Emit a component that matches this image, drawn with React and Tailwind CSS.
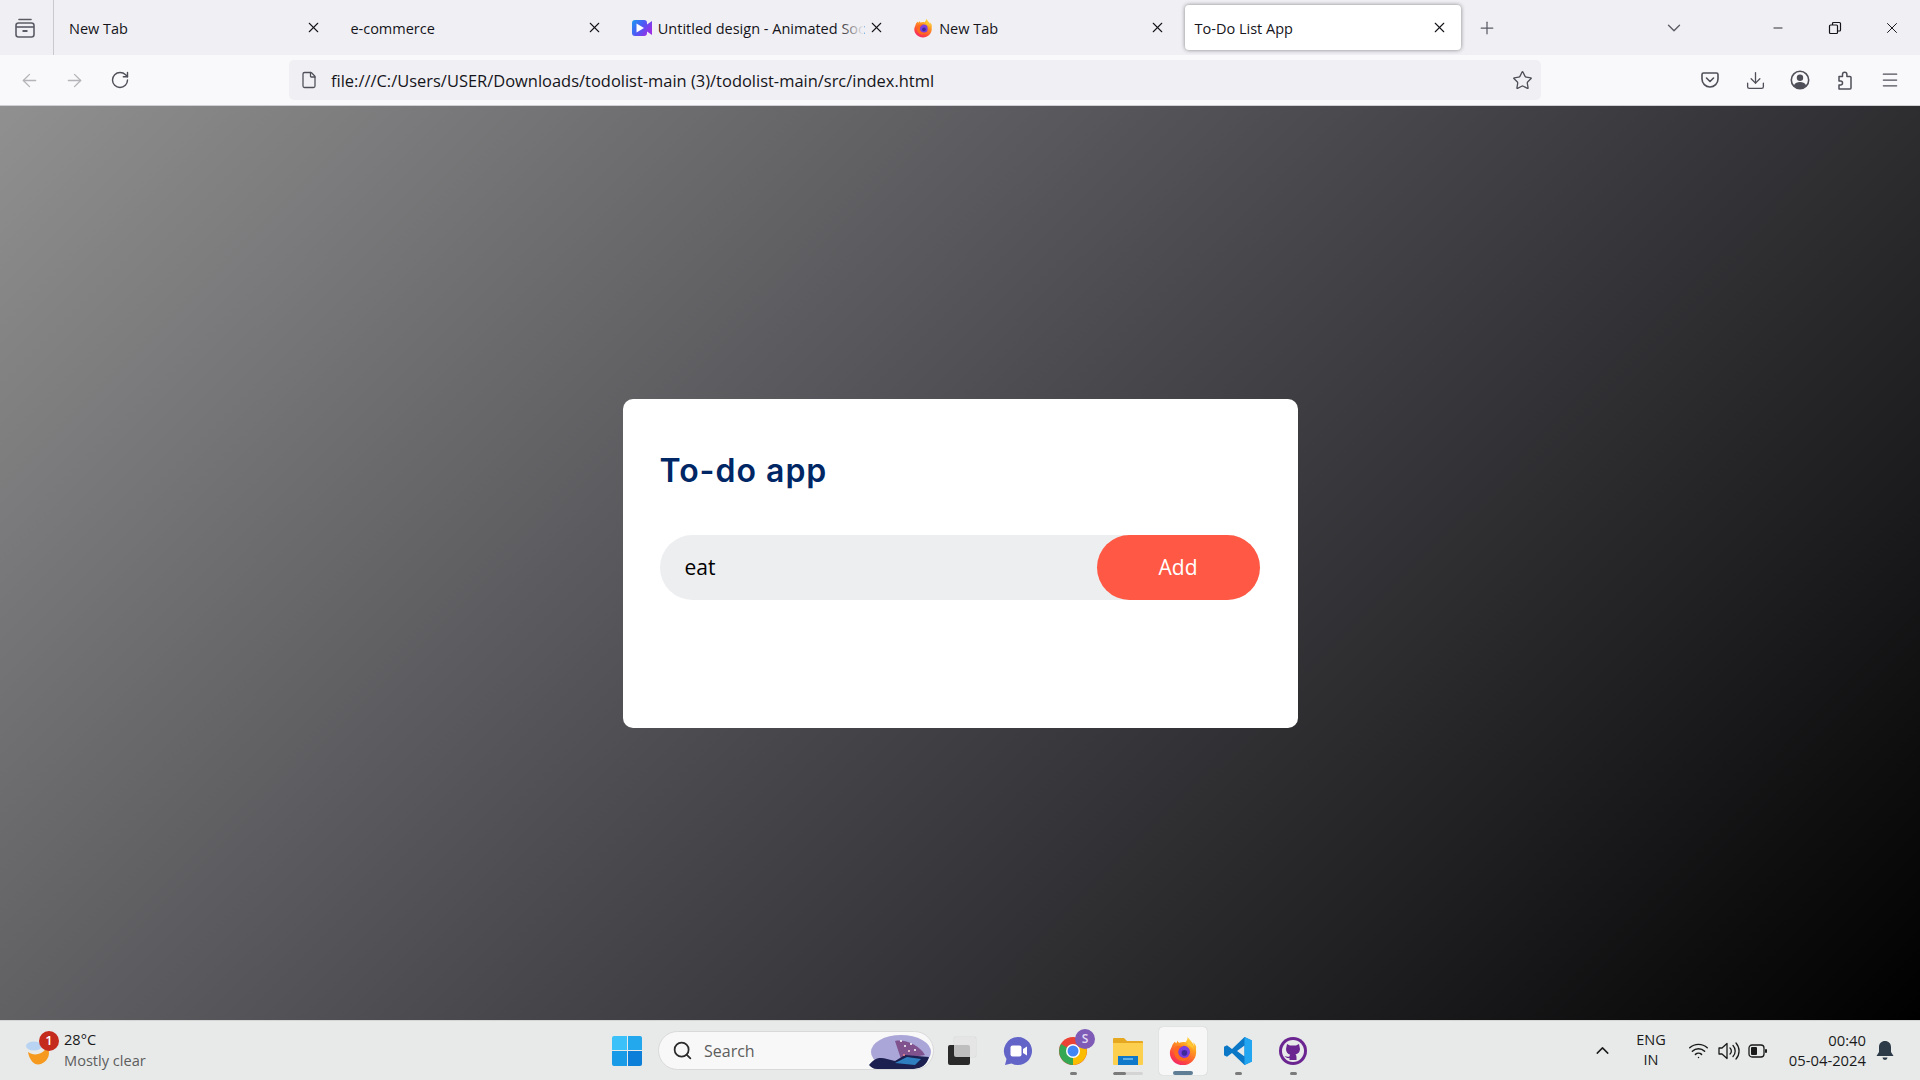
import React from "react";
import {
  ArrowLeft,
  ArrowRight,
  ChevronDown,
  ChevronUp,
  Download,
  File,
  Menu,
  Minus,
  Plus,
  RotateCw,
  Search,
  Star,
  Wifi,
  X,
} from "lucide-react";

const FirefoxIcon = ({ size = 20, id = "ff" }) => (
  <svg width={size} height={size} viewBox="0 0 32 32">
    <defs>
      <linearGradient id={id} x1="0.8" y1="0" x2="0.25" y2="1">
        <stop offset="0" stopColor="#ffe04a" />
        <stop offset="0.35" stopColor="#ff9a1f" />
        <stop offset="0.75" stopColor="#ff4a3a" />
        <stop offset="1" stopColor="#f0246e" />
      </linearGradient>
    </defs>
    <path d="M30 11c-.7-1.800-2.200-3.700-3.400-4.300.8 1.600 1.200 3.100 1.400 4.200C26 6 23 4 21 1c-.3 2.500-.8 4.200-2.300 5.600-2.300-.6-4.700-.3-6.500.7-1.100-.5-1.700-1.300-2.200-2.500-.2 1-.6 2.100-1.100 2.800-.7-.3-1.300-.8-1.700-1.500C5.200 8.200 4.400 10 3.800 12 2.600 14 2 16 2 18c0 7.300 6.300 13 14 13s14-6 14-13.500c0-2.300-.2-4.500 0-6.500z" fill={`url(#${id})`} />
    <circle cx="17" cy="17" r="6.500" fill="#7a3fe0" />
    <circle cx="17.500" cy="18" r="3" fill="#3f2a9c" />
    <path d="M8 11.500c2.500-1.500 5.500-1.500 8.500-.5-2.500.5-5 2-5.500 5-.6 4 2.500 7.500 7 7.500 3 0 5-1 6.500-3-1.500 4-5.500 6.500-9.500 6-5-.5-8.500-4.500-8.500-9.500 0-2 .5-4 1.500-5.500z" fill="#ff6a1f" />
    <path d="M19 5c4 .5 8 4 8.500 10-1.500-3-4-5-7-5.500 1-1.500 0-3.500-1.500-4.500z" fill="#ffc62e" />
  </svg>
);

const CanvaIcon = () => (
  <svg width="20" height="20" viewBox="0 0 20 20">
    <defs>
      <linearGradient id="canva" x1="0" y1="0" x2="1" y2="0.6">
        <stop offset="0" stopColor="#1d9bf0" />
        <stop offset="0.5" stopColor="#4a5cf5" />
        <stop offset="1" stopColor="#9a2fe6" />
      </linearGradient>
    </defs>
    <path d="M3 2h9a3 3 0 0 1 3 3v1.500L20 3v14l-5-3.500V15a3 3 0 0 1-3 3H3a3 3 0 0 1-3-3V5a3 3 0 0 1 3-3z" fill="url(#canva)" />
    <path d="M4.500 5.500L12 10l-7.500 4.500z" fill="#fff" />
  </svg>
);

const Tab = ({ title, icon, active, fade }) => (
  <div
    className={`relative flex h-[45px] w-[276px] shrink-0 items-center rounded-[4px] pl-[10px] pr-[13px] ${
      active ? "bg-white shadow-[0_0_4px_rgba(0,0,0,0.45)]" : ""
    }`}
  >
    {icon && <span className="mr-[6px] flex w-[20px] shrink-0">{icon}</span>}
    <span className="relative flex-1 whitespace-nowrap pt-[2px] text-[14.5px] text-[#15141a]">
      {title}
      {fade && <span className="absolute bottom-0 right-[4px] top-0 w-[26px] bg-gradient-to-r from-transparent to-[#f0f0f4]" />}
    </span>
    <X size={17} strokeWidth={1.5} className="shrink-0 text-[#15141a]" />
  </div>
);

const ToolIcon = ({ children, className = "" }) => (
  <span className={`flex h-[24px] w-[24px] items-center justify-center text-[#4f4f59] ${className}`}>{children}</span>
);

const TaskIcon = ({ children, bar, active }) => (
  <div
    className={`relative flex h-[48px] w-[48px] items-center justify-center rounded-[4px] ${
      active ? "bg-[#f7f7f7] shadow-[0_0_1px_rgba(0,0,0,0.25)]" : ""
    }`}
  >
    {children}
    {bar}
  </div>
);

export default function App() {
  return (
    <div
      className="flex h-screen w-full flex-col overflow-hidden"
      style={{ fontFamily: '"Open Sans", "Noto Sans", sans-serif' }}
    >
      {/* tab strip */}
      <div className="flex h-[55px] shrink-0 items-center bg-[#f0f0f4]">
        <div className="flex h-full w-[54px] shrink-0 items-center justify-center border-r border-[#c9c9cf] pr-[4px]">
          <svg width="20" height="20" viewBox="0 0 20 20" fill="none" stroke="#5b5b66" strokeWidth="1.6">
            <path d="M4 1.500h12" strokeLinecap="round" />
            <rect x="1" y="5" width="18" height="14" rx="2.500" />
            <path d="M1 9h18" />
            <path d="M7.500 13h5" strokeWidth="2" />
          </svg>
        </div>
        <div className="ml-[5px] flex gap-[5.4px]">
          <Tab title="New Tab" />
          <Tab title="e-commerce" />
          <Tab title="Untitled design - Animated Soc" icon={<CanvaIcon />} fade />
          <Tab title="New Tab" icon={<FirefoxIcon id="ffTab" />} />
          <Tab title="To-Do List App" active />
        </div>
        <Plus size={20} strokeWidth={1.5} className="ml-[16px] text-[#5b5b66]" />
        <ChevronDown size={22} strokeWidth={1.5} className="ml-[166px] text-[#5b5b66]" />
        <Minus size={14} strokeWidth={1.5} className="ml-[86px] text-[#15141a]" />
        <svg width="14" height="14" viewBox="0 0 14 14" fill="none" stroke="#15141a" strokeWidth="1.200" className="ml-[43px]">
          <rect x="1.500" y="4" width="8" height="8.500" rx="1" />
          <path d="M4.500 4V2.500a1 1 0 0 1 1-1h6a1 1 0 0 1 1 1v6.500a1 1 0 0 1-1 1h-2" />
        </svg>
        <X size={18} strokeWidth={1.3} className="ml-[41px] text-[#15141a]" />
      </div>

      {/* toolbar */}
      <div className="flex h-[51px] shrink-0 items-center border-b border-[#cfcfd4] bg-[#f9f9fb]">
        <ToolIcon className="ml-[17px] text-[#b4b4b9]">
          <ArrowLeft size={21} strokeWidth={1.5} />
        </ToolIcon>
        <ToolIcon className="ml-[21px] text-[#b4b4b9]">
          <ArrowRight size={21} strokeWidth={1.5} />
        </ToolIcon>
        <ToolIcon className="ml-[22px]">
          <RotateCw size={20} strokeWidth={1.7} />
        </ToolIcon>
        <div className="ml-[157px] flex h-[40px] w-[1252px] items-center rounded-[5px] bg-[#f0f0f4]">
          <File size={18} strokeWidth={1.7} className="ml-[11px] text-[#4f4f59]" />
          <span className="ml-[13px] flex-1 whitespace-nowrap pt-[2px] text-[16.47px] text-[#15141a]">
            file:///C:/Users/USER/Downloads/todolist-main (3)/todolist-main/src/index.html
          </span>
          <Star size={21} strokeWidth={1.5} className="mr-[8px] text-[#4f4f59]" />
        </div>
        <ToolIcon className="ml-[157px]">
          <svg width="20" height="20" viewBox="0 0 20 20" fill="none" stroke="currentColor" strokeWidth="1.600">
            <path d="M3.500 3h13a1.500 1.500 0 0 1 1.500 1.500V9a8 8 0 0 1-16 0V4.500A1.500 1.500 0 0 1 3.500 3z" />
            <path d="M6.500 8l3.500 3.500L13.500 8" strokeLinecap="round" strokeLinejoin="round" />
          </svg>
        </ToolIcon>
        <ToolIcon className="ml-[21px]">
          <Download size={21} strokeWidth={1.5} />
        </ToolIcon>
        <ToolIcon className="ml-[21px]">
          <svg width="20" height="20" viewBox="0 0 20 20">
            <circle cx="10" cy="10" r="8.700" fill="none" stroke="currentColor" strokeWidth="1.600" />
            <circle cx="10" cy="7.800" r="3.200" fill="currentColor" />
            <path d="M3.800 15.500C5 12.800 7.500 12 10 12s5 .8 6.200 3.500A8 8 0 0 1 10 18.500a8 8 0 0 1-6.200-3z" fill="currentColor" />
          </svg>
        </ToolIcon>
        <ToolIcon className="ml-[21px]">
          <svg width="20" height="20" viewBox="0 0 20 20" fill="none" stroke="currentColor" strokeWidth="1.500" strokeLinejoin="round">
            <path d="M4 6.500h3.500V4.500a2.200 2.200 0 0 1 4.400 0v2H15a1 1 0 0 1 1 1v10.500a1 1 0 0 1-1 1H4v-4h1.500a2 2 0 0 0 0-4H4z" />
          </svg>
        </ToolIcon>
        <ToolIcon className="ml-[21px]">
          <Menu size={20} strokeWidth={1.5} />
        </ToolIcon>
      </div>

      {/* page */}
      <main className="flex min-h-0 flex-1 items-start justify-center bg-[linear-gradient(135deg,#909090,#47464b_50%,#000000)]">
        <div className="mt-[293px] h-[329px] w-[675px] rounded-[10px] bg-white px-[37px] pt-[50px]">
          <h2
            className="text-[32px] leading-[44px] font-semibold tracking-[1px] text-[#002765]"
            style={{ fontFamily: '"Inter", "Open Sans", sans-serif' }}
          >
            To-do app
          </h2>
          <div className="mt-[42px] flex h-[65px] w-[600px] items-center rounded-full bg-[#edeef0]">
            <span className="ml-[25px] flex-1 pt-[1px] text-[21px] text-black">eat</span>
            <button className="h-[65px] w-[163px] rounded-full bg-[#ff5945] text-[21px] text-white">Add</button>
          </div>
        </div>
      </main>

      {/* windows taskbar */}
      <div className="flex h-[60px] shrink-0 items-center border-t border-[#d4d6d6] bg-[#e8eaea]">
        <div className="relative ml-[25px] h-[28px] w-[28px] shrink-0">
          <svg width="30" height="30" viewBox="0 0 30 30">
            <path d="M3 15c4 3 9 3 13 1 3-1.500 5-4 6-7 4 6 2 15-6 18-7 2.500-12-5-13-12z" fill="#f59a1f" />
            <ellipse cx="9" cy="9" rx="8" ry="4.500" fill="#b9d4f2" />
          </svg>
          <span className="absolute -top-[6px] left-[14px] flex h-[20px] w-[20px] items-center justify-center rounded-full bg-[#c42b1c] text-[13px] font-semibold text-white">
            1
          </span>
        </div>
        <div className="ml-[11px] -mt-[2px] flex w-[120px] shrink-0 flex-col text-[14.6px] leading-[21px]">
          <span className="text-[#1a1a1a]">28°C</span>
          <span className="text-[#5d5d5d]">Mostly clear</span>
        </div>
        {/* centre group */}
        <div className="ml-[428px] flex h-[40px] w-[30px] shrink-0 items-center justify-center">
          <div className="grid h-[30px] w-[30px] grid-cols-2 gap-[1px]">
            <span className="rounded-tl-[2px] bg-[#3cc2f8]" />
            <span className="rounded-tr-[2px] bg-[#23a8ee]" />
            <span className="rounded-bl-[2px] bg-[#1a9be8]" />
            <span className="rounded-br-[2px] bg-[#0d7fd8]" />
          </div>
        </div>
        <div className="relative ml-[16px] flex h-[39px] w-[276px] shrink-0 items-center overflow-hidden rounded-full border border-[#d9d9d9] bg-[#f8f8f8]">
          <Search size={21} strokeWidth={2} className="ml-[13px] text-[#2b2b2b]" />
          <span className="ml-[11px] text-[16px] text-[#5d5d5d]">Search</span>
          <svg width="64" height="34" viewBox="0 0 64 34" className="absolute right-[2px] top-[3px]">
            <ellipse cx="34" cy="17" rx="30" ry="17" fill="#aaa6d8" />
            <path d="M28 6c10-2 24 4 30 14L34 24z" fill="#80538f" />
            <path d="M2 30c6-8 12-8 18-6l8 2 10-6 24 2c-2 8-8 12-16 12H10c-4 0-6-2-8-4z" fill="#1b2050" />
            <path d="M28 28l12-6 14 2-6 6z" fill="#2f7fc0" />
            <circle cx="34" cy="6" r="1" fill="#fff" />
            <circle cx="38" cy="11" r="1" fill="#fff" />
            <circle cx="44" cy="9" r="1" fill="#fff" />
            <circle cx="42" cy="16" r="1" fill="#ffd9d9" />
            <circle cx="48" cy="15" r="1" fill="#fff" />
            <circle cx="37" cy="20" r="1" fill="#f58a8a" />
          </svg>
        </div>
        <div className="relative ml-[14px] h-[28px] w-[28px] shrink-0">
          <span className="absolute bottom-0 left-0 h-[20px] w-[22px] rounded-[2px] bg-[#2a2a2a]" />
          <span className="absolute right-0 top-0 h-[20px] w-[22px] rounded-[2px] bg-[#e4e4e4]/80 shadow-[0_0_1px_rgba(0,0,0,0.3)]" />
        </div>
        <div className="ml-[18px] flex gap-[7px]">
          <TaskIcon>
            <svg width="30" height="30" viewBox="0 0 30 30">
              <path d="M15 1a14 14 0 1 1-6.500 26.400L2 29l1.500-6A14 14 0 0 1 15 1z" fill="#6264c7" />
              <rect x="7.500" y="9.500" width="11" height="11" rx="2" fill="#fff" />
              <path d="M20 13l4-2.500v9L20 17z" fill="#fff" />
            </svg>
          </TaskIcon>
          <TaskIcon bar={<span className="absolute bottom-[0px] h-[3px] w-[7px] rounded-full bg-[#7b7b7b]" />}>
            <div className="relative">
              <svg width="30" height="30" viewBox="0 0 30 30">
                <circle cx="15" cy="15" r="14" fill="#ea4335" />
                <path d="M15 15L27 8a14 14 0 0 1-12 21z" fill="#fbbc04" />
                <path d="M15 15L15 29A14 14 0 0 1 3 8z" fill="#34a853" />
                <circle cx="15" cy="15" r="7" fill="#fff" />
                <circle cx="15" cy="15" r="5.500" fill="#4285f4" />
              </svg>
              <span className="absolute -right-[7px] -top-[7px] flex h-[20px] w-[20px] items-center justify-center rounded-full bg-[#7d5bb6] text-[12px] font-semibold text-[#e2d8f3]">
                S
              </span>
            </div>
          </TaskIcon>
          <TaskIcon
            bar={
              <span className="absolute bottom-[0px] h-[3px] w-[30px] overflow-hidden rounded-full bg-[#d4d4d4]">
                <span className="block h-full w-[13px] rounded-full bg-[#7b7b7b]" />
              </span>
            }
          >
            <svg width="30" height="28" viewBox="0 0 30 28">
              <path d="M0 2a1 1 0 0 1 1-1h10l3 3h15a1 1 0 0 1 1 1v3H0z" fill="#e6a821" />
              <path d="M0 6h30v21a1 1 0 0 1-1 1H1a1 1 0 0 1-1-1z" fill="#fdcf4f" />
              <path d="M5 19h20v9H5z" fill="#0f78c9" />
              <path d="M10 22h10" stroke="#7ec4ef" strokeWidth="1.500" />
            </svg>
          </TaskIcon>
          <TaskIcon active bar={<span className="absolute bottom-[0px] h-[4px] w-[20px] rounded-full bg-[#5f7e96]" />}>
            <FirefoxIcon size={30} id="ffBar" />
          </TaskIcon>
          <TaskIcon bar={<span className="absolute bottom-[0px] h-[3px] w-[7px] rounded-full bg-[#7b7b7b]" />}>
            <svg width="30" height="30" viewBox="0 0 30 30">
              <path d="M21.500 1L9 13 4 9.200 1 10.800v8.400l3 1.600L9 17l12.500 12 7.500-3.500v-21zM21.500 9.500v11L14 15z" fill="#0a78c6" fillRule="evenodd" />
              <path d="M21.500 1L29 4.500v21L21.500 29z" fill="#23a6f2" />
            </svg>
          </TaskIcon>
          <TaskIcon bar={<span className="absolute bottom-[0px] h-[3px] w-[7px] rounded-full bg-[#7b7b7b]" />}>
            <svg width="30" height="30" viewBox="0 0 30 30">
              <circle cx="15" cy="15" r="14" fill="#6b2590" />
              <circle cx="15" cy="15" r="11" fill="#e8eaea" />
              <path d="M9 8l3 1.500h6L21 8l1 5c0 3-2 5-4.500 5.500.6.600 1 1.500 1 2.500v3h-7v-2c-2 .5-4-.5-5-2 1.500.5 3 1 5 .5 0-.7.300-1.200.700-1.800C9.700 18 8 16 8 13z" fill="#6b2590" />
            </svg>
          </TaskIcon>
        </div>
        {/* tray */}
        <ChevronUp size={21} strokeWidth={1.7} className="ml-[275px] shrink-0 text-[#1a1a1a]" />
        <div className="ml-[21px] -mt-[1px] flex w-[34px] shrink-0 flex-col items-center text-[14.5px] leading-[20px] text-[#1a1a1a]">
          <span>ENG</span>
          <span>IN</span>
        </div>
        <Wifi size={21} strokeWidth={1.7} className="ml-[20px] shrink-0 text-[#1a1a1a]" />
        <svg width="22" height="20" viewBox="0 0 22 20" fill="none" stroke="#1a1a1a" strokeWidth="1.300" className="ml-[9px] shrink-0">
          <path d="M1 7h3l5-4.500v15L4 13H1z" strokeLinejoin="round" />
          <path d="M12 7a4 4 0 0 1 0 6M15 4.500a8 8 0 0 1 0 11M18 2a12 12 0 0 1 0 16" strokeLinecap="round" />
        </svg>
        <svg width="20" height="14" viewBox="0 0 20 14" fill="none" className="ml-[8px] shrink-0">
          <rect x="1" y="1" width="15" height="12" rx="3" stroke="#1a1a1a" strokeWidth="1.300" />
          <rect x="3" y="3" width="6" height="8" rx="1" fill="#1a1a1a" />
          <rect x="17" y="5" width="2" height="4" rx="1" fill="#1a1a1a" />
        </svg>
        <div className="ml-[10px] -mt-[2px] flex w-[88px] shrink-0 flex-col items-end text-[14.8px] leading-[20px] text-[#1a1a1a]">
          <span>00:40</span>
          <span>05-04-2024</span>
        </div>
        <svg width="18" height="20" viewBox="0 0 18 20" className="ml-[10px] shrink-0">
          <path d="M9 0c3.500 0 6 2.500 6 6v5l2.500 4H.5L3 11V6c0-3.500 2.500-6 6-6z" fill="#2d3b48" />
          <path d="M6.500 16.500h5a2.500 2.500 0 0 1-5 0z" fill="#2d3b48" />
        </svg>
      </div>
    </div>
  );
}
